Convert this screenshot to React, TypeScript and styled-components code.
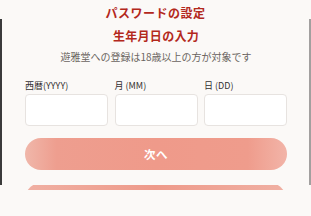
import React from 'react';
import styled, { createGlobalStyle } from 'styled-components';

const GlobalStyle = createGlobalStyle`
  html, body {
    margin: 0;
    padding: 0;
    background: #fbf9f7;
  }
  body {
    font-family: 'Noto Sans CJK JP', 'Noto Sans', sans-serif;
  }
`;

const fields = [
  { label: '西暦(YYYY)', key: 'year' },
  { label: '月 (MM)', key: 'month' },
  { label: '日 (DD)', key: 'day' },
];

function App() {
  return (
    <Page>
      <GlobalStyle />
      <Header>
        <HeaderTitle>パスワードの設定</HeaderTitle>
      </Header>
      <Panel>
        <Title>生年月日の入力</Title>
        <Subtitle>遊雅堂への登録は18歳以上の方が対象です</Subtitle>
        <FieldGrid>
          {fields.map((f) => (
            <Field key={f.key}>
              <Label>{f.label}</Label>
              <Input />
            </Field>
          ))}
        </FieldGrid>
        <PillButton>次へ</PillButton>
      </Panel>
      <PeekArea>
        <PeekPill />
      </PeekArea>
    </Page>
  );
}

const Page = styled.div`
  width: 311px;
  height: 216px;
  overflow: hidden;
  background: #fbf9f7;
  display: flex;
  flex-direction: column;
`;

const Header = styled.div`
  height: 19px;
  display: flex;
  justify-content: center;
  padding-top: 6px;
  box-sizing: border-box;
`;

const HeaderTitle = styled.div`
  font-size: 12px;
  line-height: 13px;
  font-weight: 700;
  letter-spacing: 0.5px;
  color: #b3281c;
`;

const Panel = styled.div`
  height: 166px;
  box-sizing: border-box;
  border-left: 2px solid #3b3b3b;
  border-right: 2px solid #a2a09f;
  padding: 10px 22px 0 23px;
  display: flex;
  flex-direction: column;
  align-items: center;
`;

const Title = styled.div`
  font-size: 12px;
  line-height: 14px;
  font-weight: 700;
  letter-spacing: 0.3px;
  color: #b3281c;
`;

const Subtitle = styled.div`
  margin-top: 7px;
  font-size: 10px;
  line-height: 14px;
  color: #6a6460;
`;

const FieldGrid = styled.div`
  margin-top: 16px;
  width: 262px;
  display: grid;
  grid-template-columns: 83px 83px 83px;
  column-gap: 6.5px;
`;

const Field = styled.div`
  display: flex;
  flex-direction: column;
`;

const Label = styled.div`
  font-size: 9px;
  line-height: 11px;
  color: #333030;
`;

const Input = styled.div`
  margin-top: 3px;
  height: 32px;
  box-sizing: border-box;
  background: #ffffff;
  border: 1px solid #e7e3e0;
  border-radius: 4px;
`;

const PillButton = styled.div`
  margin-top: 12px;
  width: 262px;
  height: 32px;
  border-radius: 16px;
  background: linear-gradient(
    90deg,
    #f0b7aa 0%,
    #ee9e8f 12%,
    #ef9a8a 50%,
    #ef9c8c 85%,
    #f2b4a8 100%
  );
  color: #ffffff;
  font-size: 11.5px;
  font-weight: 700;
  display: flex;
  align-items: center;
  justify-content: center;
  letter-spacing: 0.5px;
`;

const PeekArea = styled.div`
  height: 5px;
  overflow: hidden;
  padding: 0 25px;
`;

const PeekPill = styled.div`
  height: 32px;
  margin-top: -2px;
  border-radius: 16px;
  background: linear-gradient(90deg, #f0b0a3 0%, #ee9a8a 50%, #f0b0a3 100%);
`;

export default App;
